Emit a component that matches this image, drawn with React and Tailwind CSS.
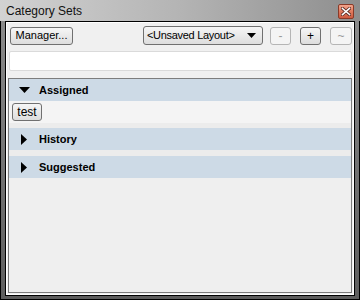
import React from 'react'

const font = { fontFamily: '"Liberation Sans", Arial, sans-serif' }

const CloseButton = () => (
  <div className="w-[16px] h-[15px] rounded-[2px] border border-[#8a3a28] bg-gradient-to-b from-[#f2a48c] via-[#e07a5e] to-[#cc5a40] flex items-center justify-center">
    <svg width="10" height="9" viewBox="0 0 10 9">
      <path d="M1.5 1.5 L8.5 7.5 M8.5 1.5 L1.5 7.5" stroke="#5a2a20" strokeWidth="3.2" strokeLinecap="square" />
      <path d="M1.5 1.5 L8.5 7.5 M8.5 1.5 L1.5 7.5" stroke="#ffffff" strokeWidth="1.6" strokeLinecap="square" />
    </svg>
  </div>
)

const Btn = ({ children, disabled, className = '' }) => (
  <div
    className={`h-[18px] rounded-[3px] border flex items-center justify-center leading-none whitespace-nowrap ${
      disabled
        ? 'border-[#b5b5b5] bg-[#f4f4f4] text-[#9a9a9a]'
        : 'border-[#707070] bg-gradient-to-b from-[#f6f6f6] to-[#dddddd] text-black'
    } ${className}`}
  >
    {children}
  </div>
)

const Section = ({ title, open, children }) => (
  <div>
    <div className="h-[22px] bg-[#cddae6] flex items-center">
      <div className="w-[30px] flex justify-center">
        {open ? (
          <svg width="11" height="6" viewBox="0 0 11 6">
            <path d="M0 0 H11 L5.5 6 Z" fill="#000" />
          </svg>
        ) : (
          <svg width="6" height="11" viewBox="0 0 6 11">
            <path d="M0 0 L6 5.5 L0 11 Z" fill="#000" />
          </svg>
        )}
      </div>
      <span className="text-[11px] font-bold text-black">{title}</span>
    </div>
    {children}
  </div>
)

export default function App() {
  return (
    <div style={font} className="w-[360px] h-[300px] border border-black bg-[#646464] flex flex-col select-none">
      {/* title bar */}
      <div className="h-[21px] shrink-0 bg-gradient-to-r from-[#d2d2d2] via-[#b4b4b4] to-[#8e8e8e] flex items-center justify-between pl-[6px] pr-[6px] -mx-px -mt-px pt-px">
        <span className="text-[12px] text-[#111]">Category Sets</span>
        <CloseButton />
      </div>
      {/* body */}
      <div className="flex-1 flex px-[4px] pb-[3px] bg-gradient-to-b from-[#8a8a8a] to-[#5e5e5e]">
        <div className="flex-1 border border-black">
          <div className="h-full border border-white bg-[#f0f0f0] flex flex-col">
            {/* toolbar */}
            <div className="flex items-center pt-[3px] pl-[3px]">
              <Btn className="w-[63px] text-[11px]">Manager...</Btn>
              <div className="ml-[70px] w-[120px] h-[19px] rounded-[3px] border border-[#707070] bg-gradient-to-b from-[#f6f6f6] to-[#dddddd] flex items-center justify-between pl-[3px] pr-[6px] text-[11px] tracking-[-0.3px] whitespace-nowrap">
                <span>&lt;Unsaved Layout&gt;</span>
                <svg width="9" height="5" viewBox="0 0 9 5">
                  <path d="M0 0 H9 L4.5 5 Z" fill="#000" />
                </svg>
              </div>
              <div className="ml-[7px] flex gap-[9px] text-[12px]">
                <Btn disabled className="w-[21px]">-</Btn>
                <Btn className="w-[21px]">+</Btn>
                <Btn disabled className="w-[22px]">~</Btn>
              </div>
            </div>
            {/* filter field */}
            <div className="mt-[6px] ml-[2px] mr-[1px] h-[20px] rounded-[2px] border border-[#dadada] bg-white" />
            {/* sections panel */}
            <div className="mt-[7px] mx-[1px] mb-[1px] flex-1 border border-[#7d7d7d] bg-[#efefef]">
              <Section title="Assigned" open>
                <div className="h-[22px] bg-[#f4f4f4] flex items-center pl-[3px]">
                  <Btn className="w-[30px] h-[17px] text-[12px]">test</Btn>
                </div>
              </Section>
              <div className="h-[5px] bg-[#ececec]" />
              <Section title="History" />
              <div className="h-[6px] bg-[#ececec]" />
              <Section title="Suggested" />
            </div>
          </div>
        </div>
      </div>
    </div>
  )
}
